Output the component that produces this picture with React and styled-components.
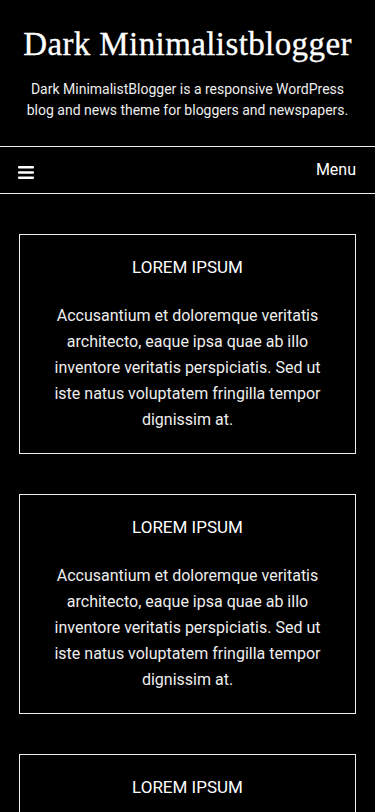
import React from 'react'
import styled, { createGlobalStyle } from 'styled-components'

const GlobalStyle = createGlobalStyle`
  html, body {
    margin: 0;
    padding: 0;
    background: #000;
  }
  body {
    color: #eee;
    font-family: Roboto, "Liberation Sans", sans-serif;
  }
`

const posts = [1, 2, 3].map((id) => ({
  id,
  title: 'LOREM IPSUM',
  text: 'Accusantium et doloremque veritatis architecto, eaque ipsa quae ab illo inventore veritatis perspiciatis. Sed ut iste natus voluptatem fringilla tempor dignissim at.',
}))

const App = () => {
  return (
    <Page>
      <GlobalStyle />
      <Header>
        <SiteTitle>Dark Minimalistblogger</SiteTitle>
        <Tagline>
          Dark MinimalistBlogger is a responsive WordPress blog and news theme
          for bloggers and newspapers.
        </Tagline>
      </Header>

      <Nav>
        <MenuIcon viewBox='0 0 16 13' aria-hidden='true'>
          <rect x='0' y='0' width='16' height='2.6' rx='1' />
          <rect x='0' y='5.2' width='16' height='2.6' rx='1' />
          <rect x='0' y='10.4' width='16' height='2.6' rx='1' />
        </MenuIcon>
        <MenuLabel>Menu</MenuLabel>
      </Nav>

      <Posts>
        {posts.map((post) => (
          <Card key={post.id}>
            <CardTitle>{post.title}</CardTitle>
            <CardText>{post.text}</CardText>
          </Card>
        ))}
      </Posts>
    </Page>
  )
}

const Page = styled.div`
  min-height: 812px;
  background: #000;
`

const Header = styled.header`
  padding: 26px 20px 25px;
  text-align: center;
`

const SiteTitle = styled.h1`
  margin: 0 -10px;
  font-family: "Liberation Serif", "DejaVu Serif", serif;
  font-weight: 400;
  font-size: 33px;
  line-height: 36px;
  letter-spacing: 0.4px;
  color: #fff;
  -webkit-text-stroke: 0.3px #fff;
`

const Tagline = styled.p`
  margin: 17px 0 0;
  font-size: 14px;
  line-height: 21px;
  color: #eee;
`

const Nav = styled.nav`
  display: flex;
  align-items: center;
  justify-content: space-between;
  height: 46px;
  padding: 0 19px 0 18px;
  border-top: 1px solid #eee;
  border-bottom: 1px solid #eee;
`

const MenuIcon = styled.svg`
  width: 16px;
  height: 13px;
  margin-top: 4px;
  fill: #fff;
`

const MenuLabel = styled.span`
  font-size: 16px;
  color: #fff;
  margin-bottom: 1px;
`

const Posts = styled.main`
  display: flex;
  flex-direction: column;
  gap: 40px;
  padding: 40px 19px;
`

const Card = styled.article`
  border: 1px solid #eee;
  padding: 20px 30px 20px;
  text-align: center;
`

const CardTitle = styled.h2`
  margin: 0;
  font-size: 17px;
  font-weight: 400;
  line-height: 24px;
  color: #fff;
`

const CardText = styled.p`
  margin: 24px 0 0;
  font-size: 16px;
  line-height: 26px;
  color: #eee;
`

export default App
